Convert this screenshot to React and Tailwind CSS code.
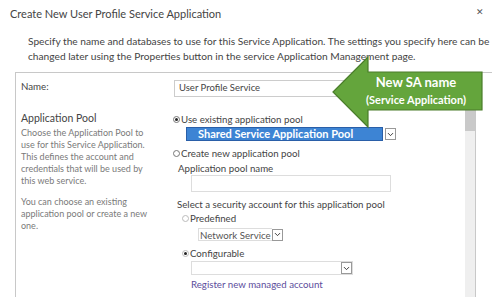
import { ChevronDown } from "lucide-react";

const font = { fontFamily: 'Lato, "Open Sans", sans-serif' };

const Radio = ({ checked, faded }) => (
    <span
        className={`inline-flex w-[7px] h-[7px] rounded-full border items-center justify-center mr-[1px] ${
            faded ? "border-[#bbb]" : "border-[#777]"
        }`}
    >
        {checked && <span className="w-[3px] h-[3px] rounded-full bg-[#222]" />}
    </span>
);

const DropBtn = () => (
    <span className="inline-flex w-[11px] h-[12px] border border-[#999] bg-white items-center justify-center">
        <ChevronDown size={9} strokeWidth={2.5} className="text-[#333]" />
    </span>
);

const Callout = () => (
    <div className="absolute left-[330px] top-[54px] w-[155px] h-[76px]">
        <svg width="155" height="76" viewBox="0 0 155 76" className="absolute inset-0">
            <polygon
                points="3,38 38,3 38,18 152,18 152,56 38,56 38,73"
                fill="#64a53c"
                stroke="#4a7d2a"
                strokeWidth="1.2"
            />
        </svg>
        <div className="absolute left-[24px] top-[18px] w-[124px] h-[38px] flex flex-col items-center justify-center text-white font-bold leading-[18px]">
            <span className="text-[13px]">New SA name</span>
            <span className="text-[11px]">(Service Application)</span>
        </div>
    </div>
);

export default function App() {
    return (
        <div className="relative w-[492px] h-[297px] bg-white overflow-hidden text-[#444]" style={font}>
            {/* Header */}
            <div className="flex items-center justify-between pl-[10px] pr-[8px] pt-[4px] h-[24px]">
                <h1 className="text-[11px] text-[#444] mt-[1px]">Create New User Profile Service Application</h1>
                <span className="text-[9px] text-[#555] mb-[4px]">✕</span>
            </div>

            <p className="pl-[28px] pt-[10px] text-[10.2px] leading-[15px] text-[#444] whitespace-nowrap">
                Specify the name and databases to use for this Service Application. The settings you specify here can be
                <br />
                changed later using the Properties button in the service Application Management page.
            </p>

            {/* Panel */}
            <div className="ml-[15px] mt-[8px] border-l border-t border-[#c8c8c8] h-[240px] flex">
                <div className="flex-1 flex">
                    {/* Left column */}
                    <div className="w-[157px] pl-[5px] pt-[6px]">
                        <p className="text-[9.7px] leading-[14px]">Name:</p>
                        <p className="text-[10.5px] leading-[14px] mt-[18px]">Application Pool</p>
                        <p className="text-[9px] leading-[12px] text-[#7a7a7a] mt-[2px] whitespace-nowrap">
                            Choose the Application Pool to
                            <br />
                            use for this Service Application.
                            <br />
                            This defines the account and
                            <br />
                            credentials that will be used by
                            <br />
                            this web service.
                        </p>
                        <p className="text-[9px] leading-[12px] text-[#7a7a7a] mt-[9px] whitespace-nowrap">
                            You can choose an existing
                            <br />
                            application pool or create a new
                            <br />
                            one.
                        </p>
                    </div>

                    {/* Right column */}
                    <div className="flex-1 pt-[7px] text-[9.7px]">
                        <div className="ml-[1px] w-[176px] h-[17px] border border-[#ccc] flex items-center px-[4px] text-[9.5px]">
                            User Profile Service
                        </div>

                        <div className="mt-[16px] flex items-center leading-[13px]">
                            <Radio checked />
                            <span>Use existing application pool</span>
                        </div>
                        <div className="ml-[13px] mt-[1px] flex items-center gap-[2px]">
                            <div className="w-[197px] h-[14px] bg-[#3d84d4] border border-[#2a5fa8] text-white font-bold text-[11px] leading-[12px] pl-[11px]">
                                Shared Service Application Pool
                            </div>
                            <DropBtn />
                        </div>

                        <div className="mt-[6px] flex items-center leading-[13px]">
                            <Radio />
                            <span>Create new application pool</span>
                        </div>
                        <div className="ml-[5px] mt-[1px] leading-[14px]">Application pool name</div>
                        <div className="ml-[18px] w-[200px] h-[17px] border border-[#ddd]" />

                        <div className="ml-[4px] mt-[5px] leading-[14px]">Select a security account for this application pool</div>
                        <div className="ml-[9px] mt-[1px] flex items-center leading-[13px]">
                            <Radio faded />
                            <span>Predefined</span>
                        </div>
                        <div className="ml-[25px] mt-[3px] flex items-center">
                            <span className="border border-[#ddd] border-r-0 px-[1px] h-[13px] leading-[12px] text-[#555]">Network Service</span>
                            <DropBtn />
                        </div>
                        <div className="ml-[9px] mt-[6px] flex items-center leading-[13px]">
                            <Radio checked faded />
                            <span>Configurable</span>
                        </div>
                        <div className="ml-[18px] mt-[1px] w-[162px] h-[14px] border border-[#ddd] flex justify-end">
                            <DropBtn />
                        </div>
                        <div className="ml-[18px] mt-[2px] text-[#5c4d9c] leading-[14px]">Register new managed account</div>
                    </div>
                </div>

                {/* Scrollbar */}
                <div className="w-[11px] mt-[35px] mr-[16px] bg-[#efefef] border-r border-[#c8c8c8] flex flex-col">
                    <div className="h-[23px] bg-[#c9c9c9]" />
                </div>
            </div>

            <Callout />
        </div>
    );
}
